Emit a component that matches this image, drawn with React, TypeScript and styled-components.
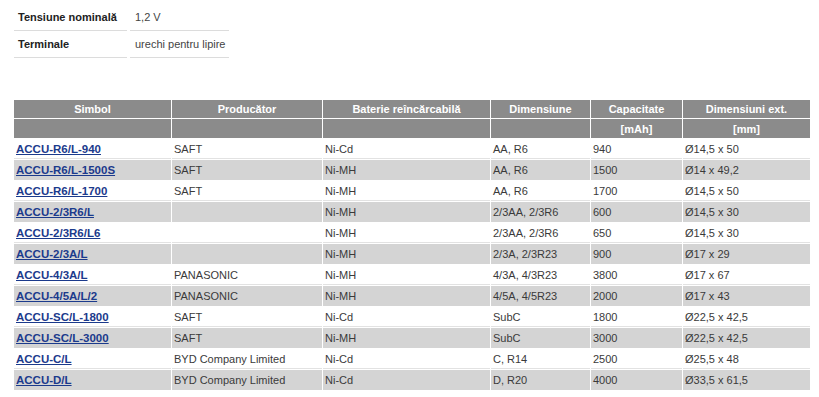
import React from "react";
import styled, { createGlobalStyle } from "styled-components";

const GlobalStyle = createGlobalStyle`
  body {
    margin: 0;
    background: #ffffff;
    font-family: "Liberation Sans", Arial, sans-serif;
    font-size: 11px;
    color: #333333;
  }
`;

const Page = styled.div`
  padding: 4px 8px 0 14px;
  display: flex;
  flex-direction: column;
  align-items: flex-start;
  gap: 41px;
`;

const SpecTable = styled.table`
  border-collapse: separate;
  border-spacing: 3px 0;
  margin-left: -3px;
  table-layout: fixed;
  width: 221px;
  td {
    height: 27px;
    border-bottom: 1px solid #dcdcdc;
    vertical-align: middle;
    box-sizing: border-box;
  }
`;

const SpecLabel = styled.td`
  width: 113px;
  padding: 0 0 0 4px;
  font-weight: bold;
  color: #222222;
  white-space: nowrap;
`;

const SpecValue = styled.td`
  width: 99px;
  padding: 0 0 0 5px;
  color: #444444;
  white-space: nowrap;
`;

const DataTable = styled.table`
  width: 798px;
  margin-left: -1px;
  table-layout: fixed;
  border-collapse: separate;
  border-spacing: 1px;
`;

const HeadCell = styled.th<{ $sub?: boolean }>`
  background: #8b8b8b;
  color: #ffffff;
  font-weight: bold;
  text-align: center;
  height: ${(p) => (p.$sub ? "19px" : "18px")};
  padding: 0;
`;

const Row = styled.tr<{ $shade: boolean }>`
  td {
    background: ${(p) => (p.$shade ? "#d4d4d4" : "#ffffff")};
    border-bottom: ${(p) => (p.$shade ? "none" : "1px solid #e2e2e2")};
  }
`;

const Cell = styled.td`
  height: 20px;
  padding: 0 0 0 2px;
  box-sizing: border-box;
  white-space: nowrap;
  overflow: hidden;
  color: #3a3a3a;
`;

const PartLink = styled.a`
  color: #1b3a8c;
  font-weight: bold;
  font-size: 11.5px;
  text-decoration: underline;
`;

interface Battery {
  code: string;
  maker: string;
  chem: string;
  size: string;
  mah: string;
  dims: string;
}

const batteries: Battery[] = [
  { code: "ACCU-R6/L-940", maker: "SAFT", chem: "Ni-Cd", size: "AA, R6", mah: "940", dims: "Ø14,5 x 50" },
  { code: "ACCU-R6/L-1500S", maker: "SAFT", chem: "Ni-MH", size: "AA, R6", mah: "1500", dims: "Ø14 x 49,2" },
  { code: "ACCU-R6/L-1700", maker: "SAFT", chem: "Ni-MH", size: "AA, R6", mah: "1700", dims: "Ø14,5 x 50" },
  { code: "ACCU-2/3R6/L", maker: "", chem: "Ni-MH", size: "2/3AA, 2/3R6", mah: "600", dims: "Ø14,5 x 30" },
  { code: "ACCU-2/3R6/L6", maker: "", chem: "Ni-MH", size: "2/3AA, 2/3R6", mah: "650", dims: "Ø14,5 x 30" },
  { code: "ACCU-2/3A/L", maker: "", chem: "Ni-MH", size: "2/3A, 2/3R23", mah: "900", dims: "Ø17 x 29" },
  { code: "ACCU-4/3A/L", maker: "PANASONIC", chem: "Ni-MH", size: "4/3A, 4/3R23", mah: "3800", dims: "Ø17 x 67" },
  { code: "ACCU-4/5A/L/2", maker: "PANASONIC", chem: "Ni-MH", size: "4/5A, 4/5R23", mah: "2000", dims: "Ø17 x 43" },
  { code: "ACCU-SC/L-1800", maker: "SAFT", chem: "Ni-Cd", size: "SubC", mah: "1800", dims: "Ø22,5 x 42,5" },
  { code: "ACCU-SC/L-3000", maker: "SAFT", chem: "Ni-MH", size: "SubC", mah: "3000", dims: "Ø22,5 x 42,5" },
  { code: "ACCU-C/L", maker: "BYD Company Limited", chem: "Ni-Cd", size: "C, R14", mah: "2500", dims: "Ø25,5 x 48" },
  { code: "ACCU-D/L", maker: "BYD Company Limited", chem: "Ni-Cd", size: "D, R20", mah: "4000", dims: "Ø33,5 x 61,5" },
];

function App(): JSX.Element {
  return (
    <>
      <GlobalStyle />
      <Page>
        <SpecTable>
          <tbody>
            <tr>
              <SpecLabel>Tensiune nominală</SpecLabel>
              <SpecValue>1,2 V</SpecValue>
            </tr>
            <tr>
              <SpecLabel>Terminale</SpecLabel>
              <SpecValue>urechi pentru lipire</SpecValue>
            </tr>
          </tbody>
        </SpecTable>

        <DataTable>
          <colgroup>
            <col style={{ width: 157 }} />
            <col style={{ width: 150 }} />
            <col style={{ width: 167 }} />
            <col style={{ width: 99 }} />
            <col style={{ width: 91 }} />
            <col style={{ width: 127 }} />
          </colgroup>
          <thead>
            <tr>
              <HeadCell>Simbol</HeadCell>
              <HeadCell>Producător</HeadCell>
              <HeadCell>Baterie reîncărcabilă</HeadCell>
              <HeadCell>Dimensiune</HeadCell>
              <HeadCell>Capacitate</HeadCell>
              <HeadCell>Dimensiuni ext.</HeadCell>
            </tr>
            <tr>
              <HeadCell $sub />
              <HeadCell $sub />
              <HeadCell $sub />
              <HeadCell $sub />
              <HeadCell $sub>[mAh]</HeadCell>
              <HeadCell $sub>[mm]</HeadCell>
            </tr>
          </thead>
          <tbody>
            {batteries.map((b, i) => (
              <Row key={b.code} $shade={i % 2 === 1}>
                <Cell>
                  <PartLink href="#">{b.code}</PartLink>
                </Cell>
                <Cell>{b.maker}</Cell>
                <Cell>{b.chem}</Cell>
                <Cell>{b.size}</Cell>
                <Cell>{b.mah}</Cell>
                <Cell>{b.dims}</Cell>
              </Row>
            ))}
          </tbody>
        </DataTable>
      </Page>
    </>
  );
}

export default App;
